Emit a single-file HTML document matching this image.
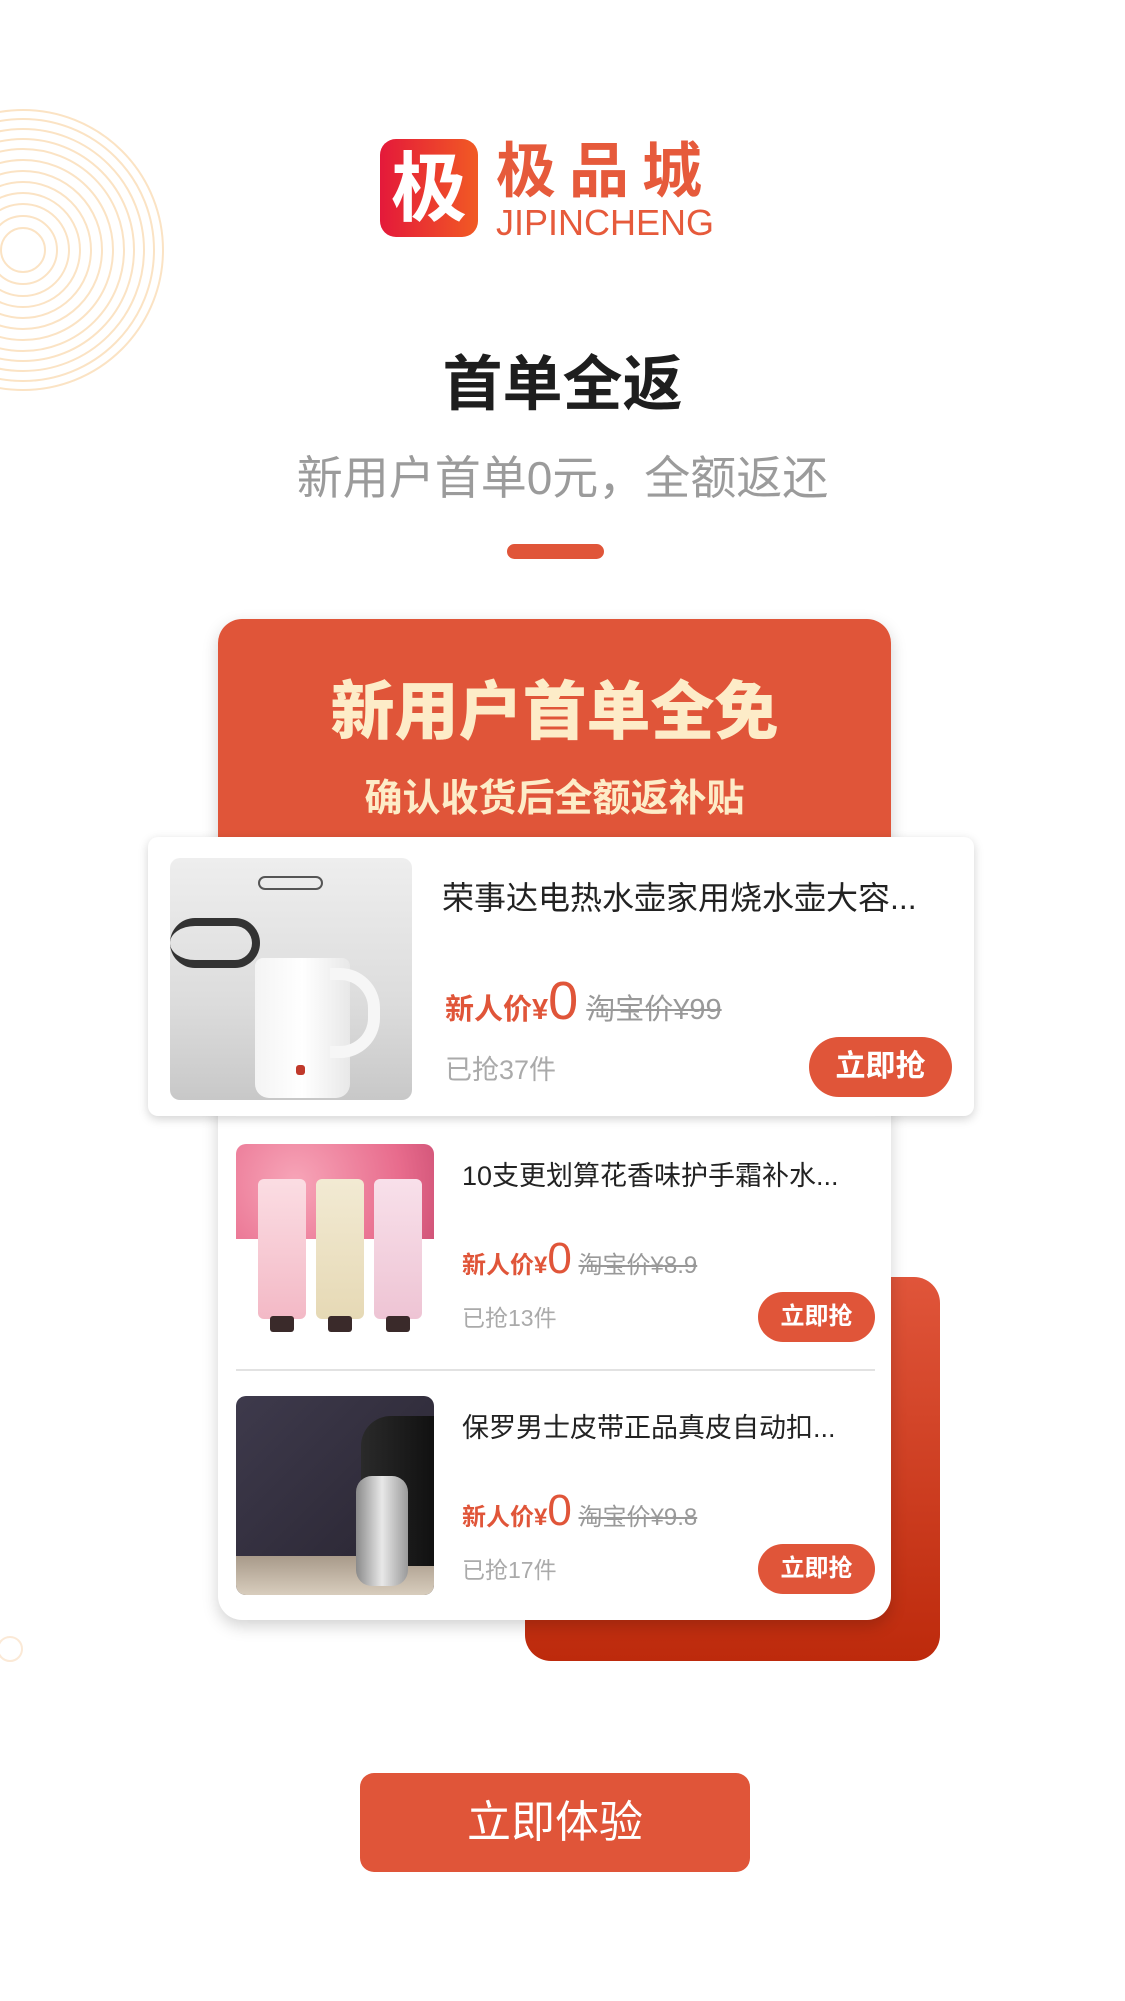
<!DOCTYPE html>
<html><head><meta charset="utf-8"><style>
*{margin:0;padding:0;box-sizing:border-box}
body{width:1125px;height:2001px;background:#fff;position:relative;overflow:hidden;font-family:"Liberation Sans","Noto Sans CJK SC",sans-serif}
.a{position:absolute}
.t{white-space:nowrap}
.btn{background:#e05539;color:#fff;border-radius:40px;text-align:center;font-weight:bold}
.strike{text-decoration:line-through;color:#999}
</style></head><body>
<svg class="a" style="left:0;top:100px" width="180" height="300" viewBox="0 0 180 300">
<g fill="none" stroke="#fbe3c4" stroke-width="2">
<circle cx="23" cy="150" r="22"/><circle cx="23" cy="150" r="34"/><circle cx="23" cy="150" r="46"/><circle cx="23" cy="150" r="57"/><circle cx="23" cy="150" r="68"/><circle cx="23" cy="150" r="79"/><circle cx="23" cy="150" r="90"/><circle cx="23" cy="150" r="101"/><circle cx="23" cy="150" r="111"/><circle cx="23" cy="150" r="121"/><circle cx="23" cy="150" r="131"/><circle cx="23" cy="150" r="140"/>
</g></svg>
<svg class="a" style="left:0;top:1636px" width="30" height="30"><circle cx="10" cy="13" r="12" fill="none" stroke="#fbe9d6" stroke-width="2"/></svg>

<div class="a" style="left:380px;top:139px;width:98px;height:98px;border-radius:16px;background:linear-gradient(90deg,#e4193a,#f15a24)"></div>
<div class="a t" style="left:384px;top:148px;width:90px;text-align:center;font-size:76px;line-height:84px;color:#fff;font-weight:bold">极</div>
<div class="a t" style="left:496px;top:138px;font-size:60px;line-height:68px;color:#e65a3b;font-weight:bold;letter-spacing:13px">极品城</div>
<div class="a t" style="left:496px;top:205px;font-size:36px;line-height:36px;color:#e65a3b">JIPINCHENG</div>

<div class="a t" style="left:0;width:1125px;top:350px;text-align:center;font-size:60px;line-height:70px;color:#1e1e1e;font-weight:bold">首单全返</div>
<div class="a t" style="left:0;width:1125px;top:450px;text-align:center;font-size:46px;line-height:56px;color:#9b9b9b">新用户首单0元，全额返还</div>
<div class="a" style="left:507px;top:544px;width:97px;height:15px;border-radius:8px;background:#e05539"></div>

<div class="a" style="left:525px;top:1277px;width:415px;height:384px;border-radius:26px;background:linear-gradient(180deg,#e0553a,#bd2a0c)"></div>
<div class="a" style="left:218px;top:619px;width:673px;height:1001px;border-radius:24px;background:#fff;box-shadow:0 6px 16px rgba(0,0,0,0.18)"></div>
<div class="a" style="left:218px;top:619px;width:673px;height:235px;border-radius:24px 24px 0 0;background:#e05539"></div>
<div class="a t" style="left:218px;width:673px;top:672px;text-align:center;font-size:64px;line-height:80px;color:#fdecc8;font-weight:900">新用户首单全免</div>
<div class="a t" style="left:218px;width:673px;top:774px;text-align:center;font-size:38px;line-height:50px;color:#fdecc8;font-weight:bold">确认收货后全额返补贴</div>

<div class="a" style="left:148px;top:837px;width:826px;height:279px;border-radius:10px;background:#fff;box-shadow:0 3px 10px rgba(0,0,0,0.18)"></div>
<div class="a" style="left:170px;top:858px;width:242px;height:242px;border-radius:10px;overflow:hidden;background:linear-gradient(180deg,#eeeeee,#dcdcdc 60%,#c8c8c8)">
 <div class="a" style="left:0;top:60px;width:90px;height:50px;border:8px solid #333;border-radius:40px;border-left:none"></div>
 <div class="a" style="left:88px;top:18px;width:65px;height:14px;border:2px solid #555;border-radius:8px"></div>
 <div class="a" style="left:85px;top:100px;width:95px;height:140px;background:linear-gradient(90deg,#f4f4f4,#fff,#e8e8e8);border-radius:8px 8px 14px 14px"></div>
 <div class="a" style="left:160px;top:110px;width:50px;height:90px;border:12px solid #f6f6f6;border-left:none;border-radius:0 40px 40px 0"></div>
 <div class="a" style="left:126px;top:207px;width:9px;height:10px;background:#c0392b;border-radius:3px"></div>
</div>
<div class="a t" style="left:442px;top:876px;font-size:32px;line-height:44px;color:#222">荣事达电热水壶家用烧水壶大容...</div>
<div class="a t" style="left:445px;top:968px;font-size:29px;line-height:66px;color:#e05539"><span style="font-weight:bold">新人价¥</span><span style="font-size:54px">0</span> <span class="strike" style="font-size:29px">淘宝价¥99</span></div>
<div class="a t" style="left:445px;top:1050px;font-size:27px;line-height:40px;color:#aaa">已抢37件</div>
<div class="a btn t" style="left:809px;top:1037px;width:143px;height:60px;line-height:60px;font-size:30px">立即抢</div>
<div class="a" style="left:236px;top:1116px;width:639px;height:2px;background:#e2e2e2"></div>

<div class="a" style="left:236px;top:1144px;width:198px;height:197px;border-radius:10px;overflow:hidden;background:#fff">
 <div class="a" style="left:0;top:0;width:198px;height:95px;background:radial-gradient(circle at 30% 40%,#f7a5b8,#e86c8d 70%,#d15478)"></div>
 <div class="a" style="left:22px;top:35px;width:48px;height:140px;border-radius:6px;background:linear-gradient(180deg,#fbdde3,#f3b9c6)"></div>
 <div class="a" style="left:80px;top:35px;width:48px;height:140px;border-radius:6px;background:linear-gradient(180deg,#f2ead3,#e6d9b5)"></div>
 <div class="a" style="left:138px;top:35px;width:48px;height:140px;border-radius:6px;background:linear-gradient(180deg,#f8e0ea,#eec4d4)"></div>
 <div class="a" style="left:34px;top:172px;width:24px;height:16px;background:#3a2a2a;border-radius:3px"></div>
 <div class="a" style="left:92px;top:172px;width:24px;height:16px;background:#3a2a2a;border-radius:3px"></div>
 <div class="a" style="left:150px;top:172px;width:24px;height:16px;background:#3a2a2a;border-radius:3px"></div>
</div>
<div class="a t" style="left:462px;top:1157px;font-size:27px;line-height:38px;color:#222">10支更划算花香味护手霜补水...</div>
<div class="a t" style="left:462px;top:1232px;font-size:24px;line-height:54px;color:#e05539"><span style="font-weight:bold">新人价¥</span><span style="font-size:44px">0</span> <span class="strike" style="font-size:24px">淘宝价¥8.9</span></div>
<div class="a t" style="left:462px;top:1301px;font-size:23px;line-height:34px;color:#aaa">已抢13件</div>
<div class="a btn t" style="left:758px;top:1292px;width:117px;height:50px;line-height:50px;font-size:24px">立即抢</div>
<div class="a" style="left:236px;top:1369px;width:639px;height:2px;background:#e2e2e2"></div>

<div class="a" style="left:236px;top:1396px;width:198px;height:199px;border-radius:10px;overflow:hidden;background:linear-gradient(135deg,#3e3a4c,#27232f)">
 <div class="a" style="left:0;top:160px;width:198px;height:39px;background:linear-gradient(180deg,#a89a8a,#d8cdbd)"></div>
 <div class="a" style="left:125px;top:20px;width:73px;height:150px;background:linear-gradient(90deg,#2a2a2a,#111);border-radius:30px 0 0 0"></div>
 <div class="a" style="left:120px;top:80px;width:52px;height:110px;border-radius:16px;background:linear-gradient(90deg,#8a8a8a,#e8e8e8,#9a9a9a)"></div>
</div>
<div class="a t" style="left:462px;top:1409px;font-size:27px;line-height:38px;color:#222">保罗男士皮带正品真皮自动扣...</div>
<div class="a t" style="left:462px;top:1484px;font-size:24px;line-height:54px;color:#e05539"><span style="font-weight:bold">新人价¥</span><span style="font-size:44px">0</span> <span class="strike" style="font-size:24px">淘宝价¥9.8</span></div>
<div class="a t" style="left:462px;top:1553px;font-size:23px;line-height:34px;color:#aaa">已抢17件</div>
<div class="a btn t" style="left:758px;top:1544px;width:117px;height:50px;line-height:50px;font-size:24px">立即抢</div>

<div class="a t" style="left:360px;top:1773px;width:390px;height:99px;border-radius:14px;background:#e05539;color:#fff;text-align:center;line-height:99px;font-size:44px">立即体验</div>
</body></html>
